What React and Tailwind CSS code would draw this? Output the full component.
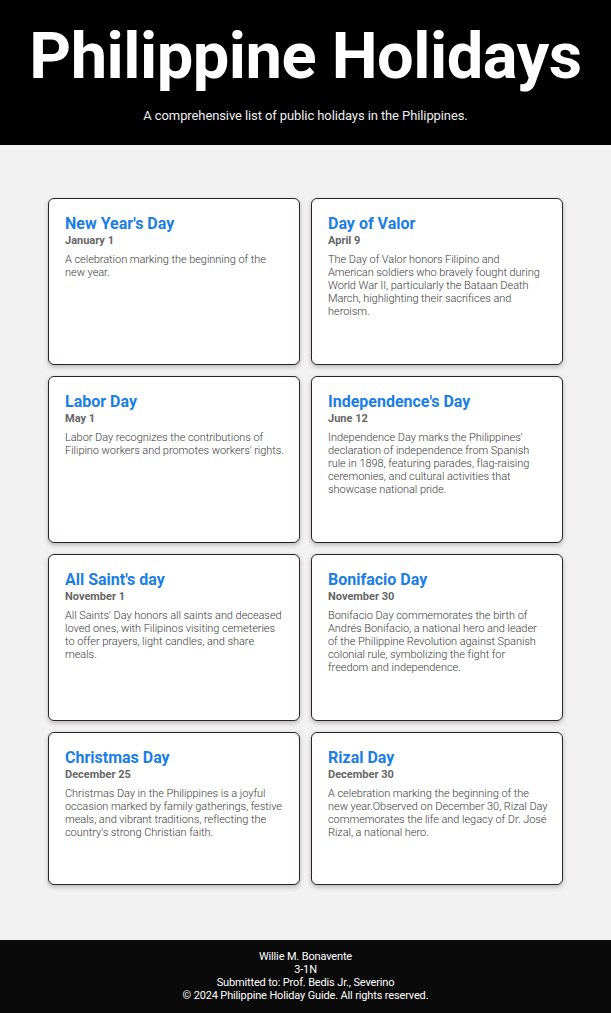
const holidays = [
  { name: "New Year's Day", date: 'January 1', text: ['A celebration marking the beginning of the new year.'] },
  { name: 'Day of Valor', date: 'April 9', text: ['The Day of Valor honors Filipino and', 'American soldiers who bravely fought during World War II, particularly the Bataan Death March, highlighting their sacrifices and heroism.'] },
  { name: 'Labor Day', date: 'May 1', text: ["Labor Day recognizes the contributions of Filipino workers and promotes workers' rights."] },
  { name: "Independence's Day", date: 'June 12', text: ["Independence Day marks the Philippines' declaration of independence from Spanish rule in 1898, featuring parades, flag-raising ceremonies, and cultural activities that showcase national pride."] },
  { name: "All Saint's day", date: 'November 1', text: ["All Saints' Day honors all saints and deceased loved ones, with Filipinos visiting cemeteries to offer prayers, light candles, and share meals."] },
  { name: 'Bonifacio Day', date: 'November 30', text: ['Bonifacio Day commemorates the birth of Andrés Bonifacio, a national hero and leader of the Philippine Revolution against Spanish colonial rule, symbolizing the fight for freedom and independence.'] },
  { name: 'Christmas Day', date: 'December 25', text: ["Christmas Day in the Philippines is a joyful occasion marked by family gatherings, festive meals, and vibrant traditions, reflecting the country's strong Christian faith."] },
  { name: 'Rizal Day', date: 'December 30', text: ['A celebration marking the beginning of the new year.Observed on December 30, Rizal Day commemorates the life and legacy of Dr. José Rizal, a national hero.'] },
];

function HolidayCard({ name, date, text, last }) {
  return (
    <div
      className={`bg-white border border-[#2a2325] rounded-[6px] shadow-[0_2px_5px_rgba(0,0,0,0.25)] pl-[16px] pr-[14px] pt-[15px] ${last ? 'h-[153px]' : 'h-[167px]'}`}
    >
      <h2 className="text-[16px] leading-[20px] font-bold text-[#1a7ee6]">{name}</h2>
      <p className="text-[11px] leading-[14px] font-bold text-[#666]">{date}</p>
      <p className="mt-[5px] text-[11px] leading-[13px] font-light tracking-[-0.05px] text-[#3a3a3a]">
        {text.map((t, i) => (
          <span key={i}>
            {i > 0 && <br />}
            {t}
          </span>
        ))}
      </p>
    </div>
  );
}

export default function App() {
  return (
    <div className="min-h-screen flex flex-col bg-[#f2f2f2]" style={{ fontFamily: 'Roboto, "Liberation Sans", sans-serif' }}>
      {/* header */}
      <header className="bg-black text-white text-center h-[145px] pt-[16px]">
        <h1 className="text-[65px] leading-[80px] font-bold tracking-[-0.5px]">Philippine Holidays</h1>
        <p className="mt-[12px] text-[13px] leading-[16px] tracking-[-0.1px] text-[#eee]">A comprehensive list of public holidays in the Philippines.</p>
      </header>

      {/* cards */}
      <main className="flex-1 pt-[53px] pb-[55px]">
        <div className="w-[515px] mx-auto grid grid-cols-2 gap-[11px]">
          {holidays.map((h, i) => (
            <HolidayCard key={h.name} {...h} last={i >= 6} />
          ))}
        </div>
      </main>

      {/* footer */}
      <footer className="bg-[#0a0a0a] text-white text-center text-[11px] leading-[13px] tracking-[-0.15px] h-[73px] pt-[10px]">
        <p>Willie M. Bonavente</p>
        <p>3-1N</p>
        <p>Submitted to: Prof. Bedis Jr., Severino</p>
        <p>© 2024 Philippine Holiday Guide. All rights reserved.</p>
      </footer>
    </div>
  );
}
